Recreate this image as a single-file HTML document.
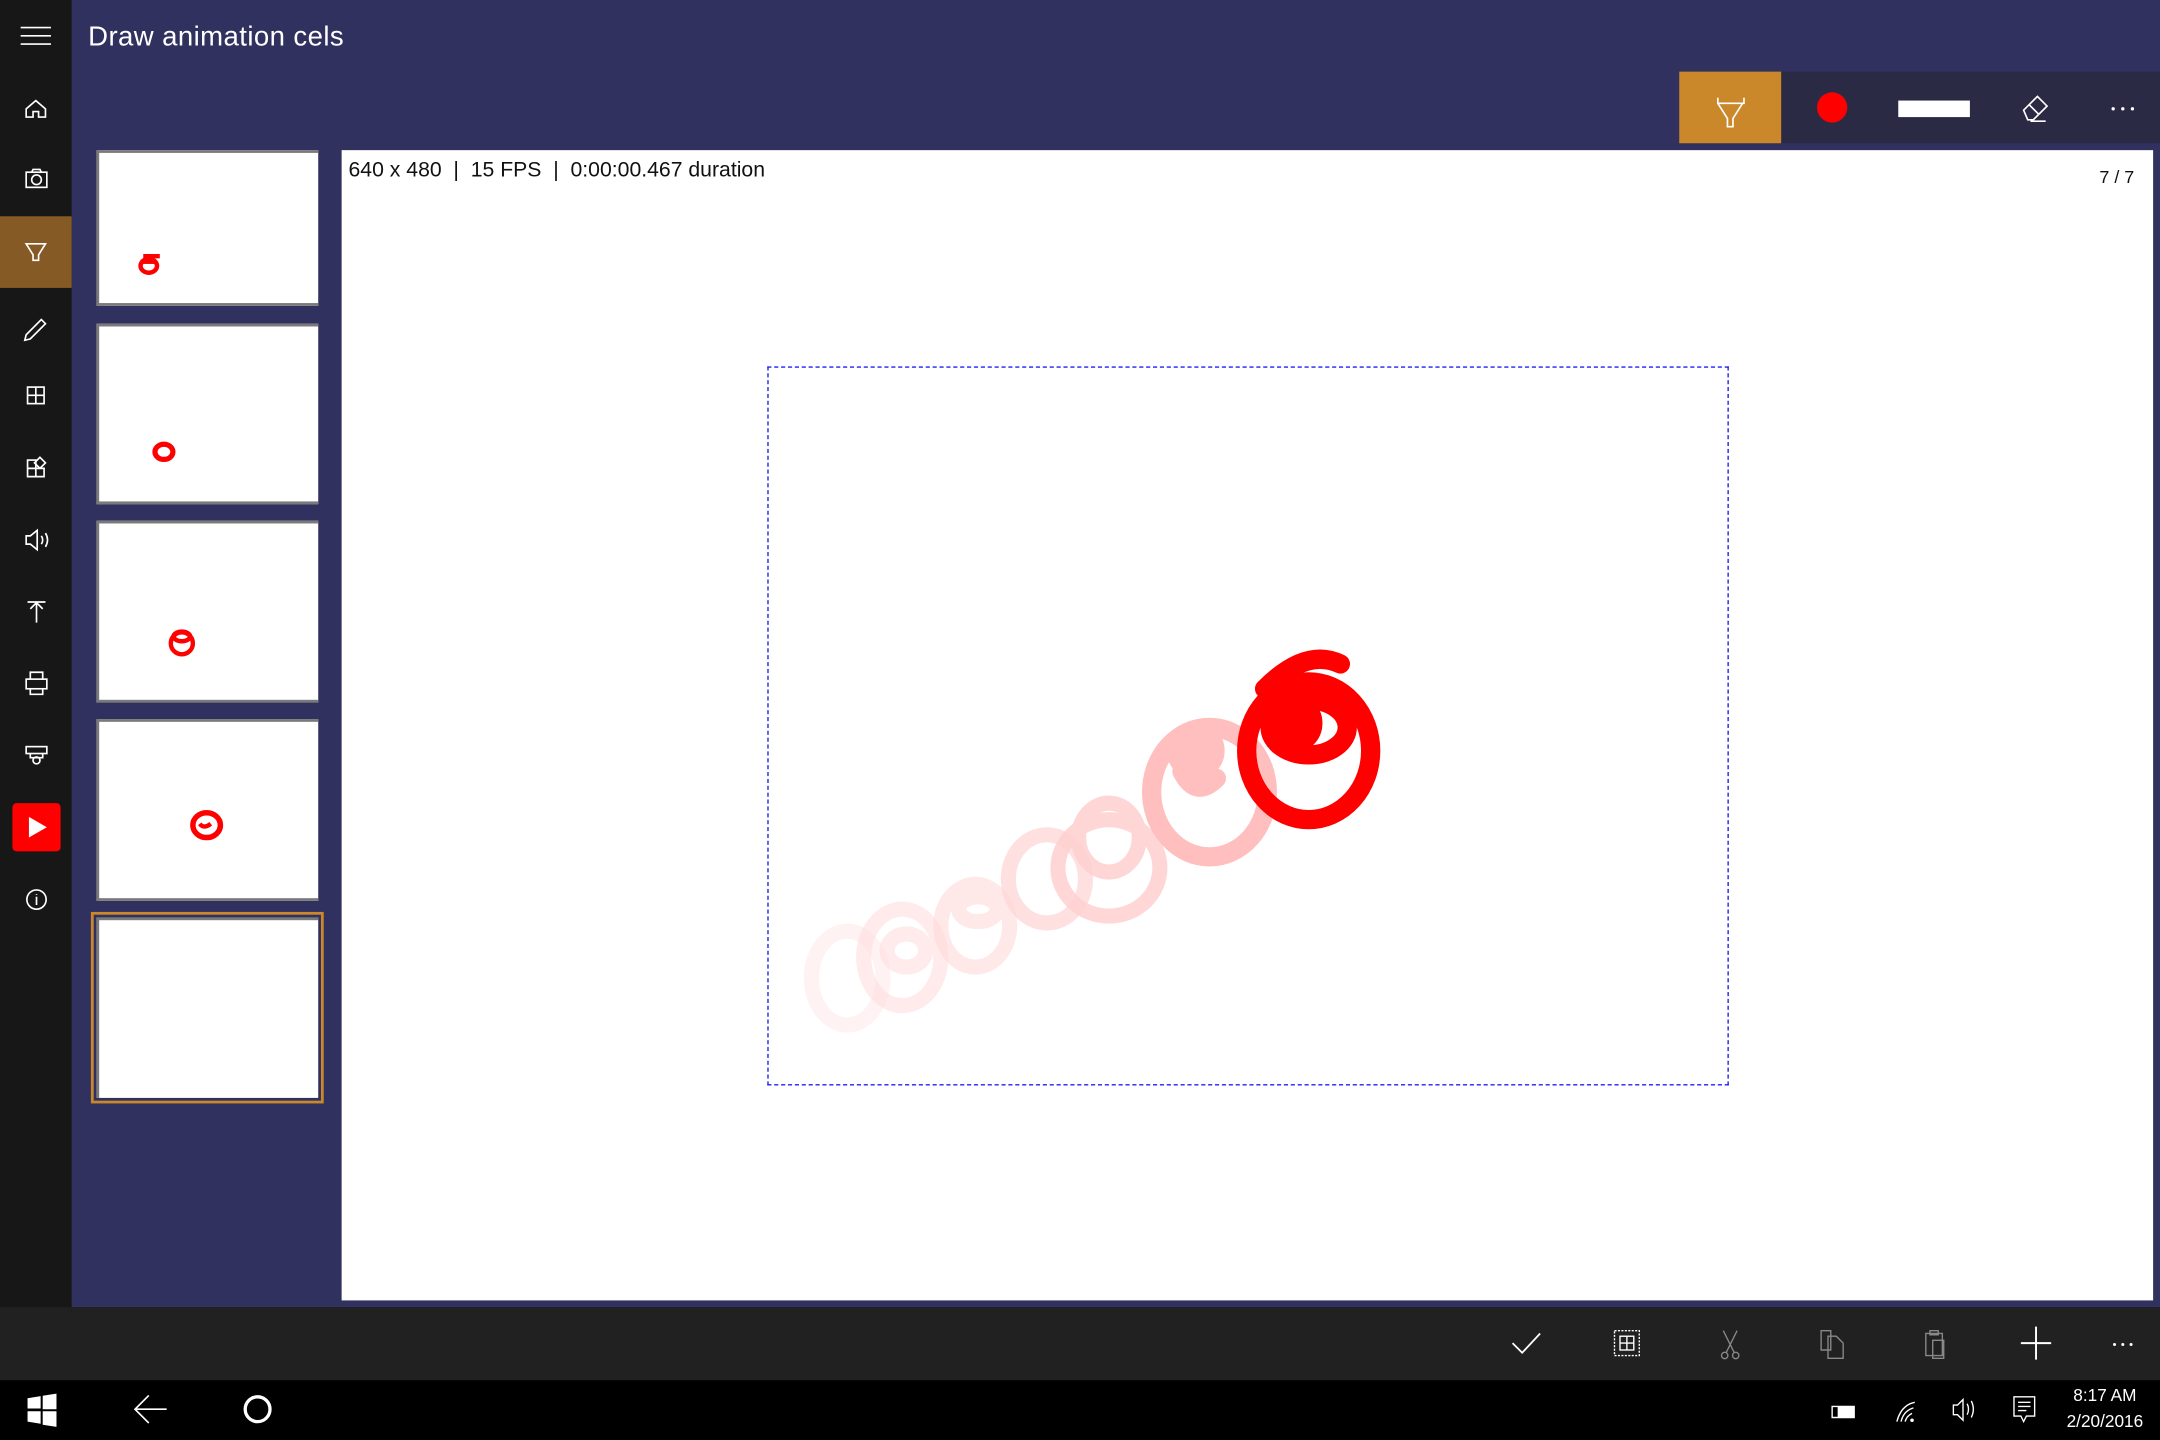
<!DOCTYPE html>
<html><head><meta charset="utf-8"><style>
html,body{margin:0;padding:0;width:2160px;height:1440px;overflow:hidden;background:#000;}
#s{position:absolute;left:0;top:0;width:1568px;height:1045px;transform:scale(1.377551);transform-origin:0 0;font-family:"Segoe UI","Liberation Sans",sans-serif;}
.a{position:absolute;}
svg{position:absolute;overflow:visible}
.ic{stroke:#fff;fill:none;stroke-width:1.2}
.th{position:absolute;left:70px;width:161px;background:#fff;border-left:2px solid #7a7a7a;border-bottom:2px solid #7a7a7a;border-top:2px solid #7a7a7a;box-sizing:border-box}
</style></head><body><div id="s">
<div class="a" style="left:0;top:0;width:1568px;height:949px;background:#31315f"></div>
<div class="a" style="left:0;top:0;width:52px;height:949px;background:#171717"></div>
<div class="a" style="left:0;top:157px;width:52px;height:52px;background:#855a24"></div>
<div class="a" style="left:64px;top:16px;color:#fff;font-size:20px;letter-spacing:0.3px">Draw animation cels</div>
<svg width="52" height="700" style="left:0;top:0" class="ic">
<path d="M15 20h22M15 26h22M15 32h22"/>
<path d="M19 85v-6l7-6 7 6v6h-5v-4h-4v4z"/>
<rect x="19" y="125" width="15" height="11"/><circle cx="26.5" cy="130.5" r="3.5"/><path d="M23 125l1-2h5l1 2"/>
<path d="M19 177h14l-5 8v4h-4v-4z"/>
<path d="M19 243l11-11 3 3-11 11-4 1z"/>
<rect x="20" y="281" width="12" height="12"/><path d="M26 281v12M20 287h12"/>
<path d="M20 334h6v12h-6zM20 340h12v6h-6M29 332l4 4-4 4-4-4z"/>
<path d="M19 389h3l5-4v14l-5-4h-3zM30 389q2 3 0 6M33 387q3 5 0 10"/>
<path d="M20 437h13M26.5 452v-14M22 442l4.5-4.5 4.5 4.5"/>
<rect x="19" y="493" width="15" height="7"/><path d="M22 493v-5h9v5M22 500v4h9v-4"/>
<rect x="19" y="542" width="15" height="5"/><path d="M22 547v3h9v-3"/><circle cx="26.5" cy="552" r="2.5"/>
<circle cx="26.5" cy="653" r="7"/><path d="M26.5 651v6M26.5 649v.5"/>
</svg>
<div class="a" style="left:9px;top:583px;width:35px;height:35px;background:#f00;border-radius:3px"></div>
<svg width="52" height="40" style="left:0;top:583px"><path d="M21 10l13 7.5-13 7.5z" fill="#fff"/></svg>
<div class="a" style="left:1219px;top:52px;width:349px;height:52px;background:#2a2a45"></div>
<div class="a" style="left:1219px;top:52px;width:74px;height:52px;background:#cb882b"></div>
<svg width="349" height="52" style="left:1219px;top:52px">
<path class="ic" d="M28 19v4h19v-4M28 23l7 11v6h4v-6l7-11" stroke-width="1.5"/>
<circle cx="111" cy="26" r="11" fill="#f00"/>
<rect x="159" y="21" width="52" height="12" fill="#fff"/>
<path class="ic" d="M250 28l10-10 7 7-10 10h-4zM254 24l7 7M255 36h11" stroke-width="1.5"/>
<circle cx="315" cy="27" r="1.2" fill="#fff"/><circle cx="322" cy="27" r="1.2" fill="#fff"/><circle cx="329" cy="27" r="1.2" fill="#fff"/>
</svg>
<div class="th" style="top:109px;height:113px"></div>
<div class="th" style="top:235px;height:131px"></div>
<div class="th" style="top:378px;height:132px"></div>
<div class="th" style="top:522px;height:132px"></div>
<div class="a" style="left:66px;top:662px;width:165px;height:135px;border:2px solid #cb882b"></div>
<div class="th" style="top:666px;height:131px;border-bottom:none"></div>
<svg width="240" height="700" style="left:0;top:0" fill="none" stroke="#f00" stroke-width="3.2">
<ellipse cx="108" cy="193" rx="6" ry="5"/><path d="M102 190h10"/><path d="M104 186h12"/>
<ellipse cx="119" cy="328" rx="6.5" ry="5.5" stroke-width="3.8"/>
<ellipse cx="132" cy="467" rx="8" ry="8"/><ellipse cx="132" cy="462" rx="6" ry="3.5"/>
<ellipse cx="150" cy="599" rx="10" ry="9" stroke-width="4"/><path d="M145 598q3 4 8 0" />
</svg>
<div class="a" style="left:248px;top:109px;width:1315px;height:835px;background:#fff"></div>
<div class="a" style="left:253px;top:115px;font-size:15.4px;color:#111">640 x 480 &nbsp;|&nbsp; 15 FPS &nbsp;|&nbsp; 0:00:00.467 duration</div>
<div class="a" style="left:1524px;top:121px;font-size:13px;color:#111">7 / 7</div>
<div class="a" style="left:557px;top:266px;width:696px;height:520px;border:1.5px dashed #2020ee"></div>
<svg width="1568" height="1045" style="left:0;top:0" fill="none" stroke-linecap="round">
<g stroke="#ffd9d9" stroke-width="11" opacity="0.35"><ellipse cx="615" cy="710" rx="26" ry="34"/></g>
<g stroke="#ffd9d9" stroke-width="11" opacity="0.5"><ellipse cx="655" cy="695" rx="28" ry="35"/><ellipse cx="658" cy="690" rx="14" ry="12"/></g>
<g stroke="#ffd9d9" stroke-width="11" opacity="0.6"><ellipse cx="708" cy="672" rx="25" ry="30"/><ellipse cx="710" cy="660" rx="14" ry="9"/></g>
<g stroke="#ffd6d6" stroke-width="11" opacity="0.75"><ellipse cx="760" cy="638" rx="28" ry="32"/></g>
<g stroke="#ffd0d0" stroke-width="11" opacity="0.85"><ellipse cx="805" cy="630" rx="37" ry="35"/><ellipse cx="805" cy="608" rx="22" ry="25"/></g>
<g stroke="#ffbfbf" stroke-width="14"><ellipse cx="878" cy="575" rx="42" ry="47"/><path d="M858 560q10 20 25 5"/><circle cx="868" cy="545" r="14" fill="#ffbfbf"/></g>
<g stroke="#f00" stroke-width="14"><ellipse cx="950" cy="545" rx="45" ry="50"/><ellipse cx="950" cy="528" rx="28" ry="20"/><circle cx="938" cy="525" r="15" fill="#f00"/><path d="M918 500q30-30 55-18"/></g>
</svg>
<div class="a" style="left:0;top:949px;width:1568px;height:53px;background:#212121"></div>
<svg width="1568" height="53" style="left:0;top:949px" fill="none">
<path d="M1098 26l7 7 13-14" stroke="#fff" stroke-width="1.3"/>
<rect x="1172" y="17" width="18" height="18" stroke="#fff" stroke-dasharray="1.5 1"/><rect x="1176" y="21" width="10" height="10" stroke="#fff"/><path d="M1181 21v10M1176 26h10" stroke="#fff"/>
<path d="M1251 17l8 16M1261 17l-8 16" stroke="#888"/><circle cx="1252" cy="35" r="2.3" stroke="#888"/><circle cx="1260" cy="35" r="2.3" stroke="#888"/>
<path d="M1322 17h7v14h-7zM1327 21h6l5 5v11h-11z" stroke="#888"/>
<path d="M1398 19h12v16h-12zM1401 17h6v3h-6zM1403 24h8v13h-8z" stroke="#888"/>
<path d="M1478 14v24M1467 26h22" stroke="#fff" stroke-width="1.4"/>
<circle cx="1535" cy="27" r="1.1" fill="#fff"/><circle cx="1541" cy="27" r="1.1" fill="#fff"/><circle cx="1547" cy="27" r="1.1" fill="#fff"/>
</svg>
<div class="a" style="left:0;top:1002px;width:1568px;height:43px;background:#000"></div>
<svg width="1568" height="43" style="left:0;top:1002px" fill="none">
<path d="M20 13l9.5-1.5v9H20zM31 11.2l10-1.5v11.3H31zM20 22.5h9.5v9L20 30zM31 22.5h10v11.3l-10-1.5z" fill="#fff"/>
<path d="M98 21h23M108 11l-10 10 10 10" stroke="#fff" stroke-width="1.2"/>
<circle cx="187" cy="21" r="9" stroke="#fff" stroke-width="2.4"/>
<path d="M1330 19h16v8h-16z" stroke="#fff"/><rect x="1334" y="19" width="12" height="8" fill="#fff"/>
<path d="M1377 30q3-12 13-14M1380 30q2-8 9-10M1383 30q1-4 5-6" stroke="#fff"/><circle cx="1388" cy="29" r="1.3" fill="#fff"/>
<path d="M1418 18h3l4-4v15l-4-4h-3zM1428 17q2 4 0 8M1431 15q3 6 0 12" stroke="#fff"/>
<path d="M1462 12h15v14h-6l-2 4-2-4h-5zM1465 16h9M1465 19h9M1465 22h6" stroke="#fff"/>
</svg>
<div class="a" style="left:1492px;top:1004px;width:72px;color:#fff;font-size:12.5px;text-align:center;line-height:19px">8:17 AM<br>2/20/2016</div>
</div></body></html>
